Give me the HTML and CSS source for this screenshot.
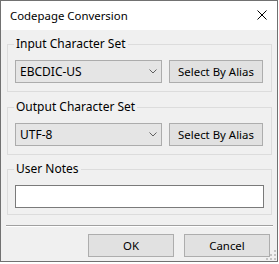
FILE: index.html
```html
<!DOCTYPE html>
<html>
<head>
    <meta charset="utf-8">
    <title>Codepage Conversion</title>
    <link rel="stylesheet" href="styles.css">
</head>
<body>
    <div class="window">
        <div class="titlebar">
            <span class="title">Codepage Conversion</span>
            <svg class="close" width="10" height="10" viewBox="0 0 10 10">
                <path d="M0.5 0.5 L9.5 9.5 M9.5 0.5 L0.5 9.5" stroke="#000" stroke-width="1" fill="none"/>
            </svg>
        </div>
        <div class="content">
            <fieldset class="group">
                <legend>Input Character Set</legend>
                <div class="row">
                    <div class="combo">
                        <span>EBCDIC-US</span>
                        <svg class="arrow" width="8" height="5" viewBox="0 0 8 5"><path d="M0.5 0.5 L4 4 L7.5 0.5" stroke="#606060" fill="none"/></svg>
                    </div>
                    <button class="btn alias-btn">Select By Alias</button>
                </div>
            </fieldset>
            <fieldset class="group">
                <legend>Output Character Set</legend>
                <div class="row">
                    <div class="combo">
                        <span>UTF-8</span>
                        <svg class="arrow" width="8" height="5" viewBox="0 0 8 5"><path d="M0.5 0.5 L4 4 L7.5 0.5" stroke="#606060" fill="none"/></svg>
                    </div>
                    <button class="btn alias-btn">Select By Alias</button>
                </div>
            </fieldset>
            <fieldset class="group notes-group">
                <legend>User Notes</legend>
                <input class="notes" type="text">
            </fieldset>
            <div class="separator"></div>
            <div class="footer">
                <button class="btn footer-btn">OK</button>
                <button class="btn footer-btn">Cancel</button>
            </div>
        </div>
        <!-- size grip -->
        <svg class="grip" width="10" height="10" viewBox="0 0 10 10">
            <rect x="8" y="0" width="2" height="2" fill="#c4c4c4"/>
            <rect x="4" y="4" width="2" height="2" fill="#c4c4c4"/>
            <rect x="8" y="4" width="2" height="2" fill="#c4c4c4"/>
            <rect x="0" y="8" width="2" height="2" fill="#c4c4c4"/>
            <rect x="4" y="8" width="2" height="2" fill="#c4c4c4"/>
            <rect x="8" y="8" width="2" height="2" fill="#c4c4c4"/>
        </svg>
    </div>
</body>
</html>
```

FILE: styles.css
```css
body {
    margin: 0;
    background: #ffffff;
    font-family: "Noto Sans", "Open Sans", sans-serif;
    font-size: 12px;
    color: #000;
}
.window {
    position: relative;
    width: 278px;
    height: 262px;
    box-sizing: border-box;
    border: 1px solid #717171;
    background: #f0f0f0;
}
.titlebar {
    height: 29px;
    background: #fff;
    display: flex;
    align-items: center;
    padding-left: 9px;
    padding-right: 10px;
}
.title {
    flex: 1;
    font-size: 11.4px;
    line-height: 16px;
}
.close {
    display: block;
    margin-top: -2px;
}
.content {
    padding: 6px 5px 0 6px;
}
.group {
    margin: 0;
    padding: 8px 7px 8px 7px;
    border: 1px solid #dcdcdc;
    min-width: 0;
}
.group + .group {
    margin-top: 7px;
}
.notes-group {
    padding-bottom: 6px;
}
.group + .notes-group {
    margin-top: 6px;
}
.group legend {
    display: block;
    height: 16px;
    padding: 0 2px;
    margin-left: -1px;
    line-height: 16px;
}
.row {
    display: flex;
    gap: 7px;
}
.combo {
    width: 147px;
    height: 23px;
    box-sizing: border-box;
    border: 1px solid #acacac;
    background: #e5e5e5;
    display: flex;
    align-items: center;
    padding: 0 4px;
}
.combo span {
    flex: 1;
}
.arrow {
    display: block;
}
.btn {
    font-family: inherit;
    font-size: 11.4px;
    color: #000;
    height: 23px;
    box-sizing: border-box;
    border: 1px solid #adadad;
    background: #e1e1e1;
    padding: 0;
    margin: 0;
}
.alias-btn {
    width: 94px;
}
.notes {
    display: block;
    width: 249px;
    height: 23px;
    box-sizing: border-box;
    border: 1px solid #7a7a7a;
    background: #fff;
    margin: 0;
    padding: 0 3px;
}
.separator {
    height: 1px;
    background: #a0a0a0;
    border-bottom: 1px solid #fff;
    margin: 10px -1px 0 -1px;
}
.footer {
    display: flex;
    justify-content: flex-end;
    gap: 10px;
    margin-top: 7px;
    padding-right: 2px;
}
.footer-btn {
    width: 86px;
}
.grip {
    position: absolute;
    right: 1px;
    bottom: 1px;
}
```
